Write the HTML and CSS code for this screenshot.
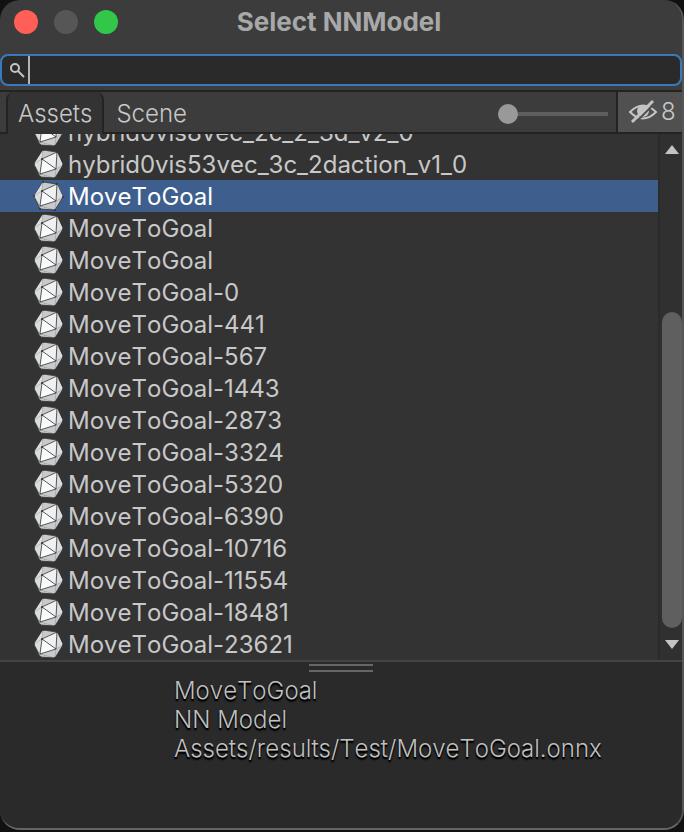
FILE: index.html
```html
<!DOCTYPE html>
<html lang="en">
<head>
<meta charset="utf-8">
<title>Select NNModel</title>
<link rel="stylesheet" href="styles.css">
</head>
<body>
<svg class="defs" aria-hidden="true">
  <symbol id="model" viewBox="0 0 32 32">
    <path fill="#c8cacb" stroke="#333" stroke-width=".8" d="M11 2 25 4 31 17 23 30 8 29 2 16z"/>
    <path fill="#dcddde" d="M2 16 11 2 10 11 8 26zM25 4 31 17 24 21z"/>
    <path fill="#f0f1f2" d="M10 11 25 4 24 21z"/>
    <path fill="#f9fafb" d="M10 11 24 21 8 26z"/>
    <path fill="none" stroke="#333" stroke-width=".8" d="M10 11 25 4 24 21 10 11 8 26 24 21"/>
    <path fill="none" stroke="#333" stroke-width=".8" stroke-opacity=".25" d="M11 2 10 11 2 16 8 26 8 29M8 26 23 30 24 21 31 17"/>
    <path fill="none" stroke="#333" stroke-width="2" stroke-linecap="round" d="M11 2h0M25 4h0M31 17h0M23 30h0M8 29h0M2 16h0M10 11h0"/>
  </symbol>
</svg>
<main class="window">
  <header class="titlebar">
    <div class="lights">
      <button class="light red" aria-label="Close"></button>
      <button class="light grey" aria-label="Minimize"></button>
      <button class="light green" aria-label="Zoom"></button>
    </div>
    <h1>Select NNModel</h1>
  </header>
  <label class="search">
    <svg viewBox="0 0 16 16" width="16" height="16" aria-hidden="true"><circle cx="6" cy="6" r="4" fill="none" stroke="#c4c4c4" stroke-width="2"/><path d="m9 9 6 6" stroke="#c4c4c4" stroke-width="2"/></svg>
    <span class="caret"></span>
    <input type="text" aria-label="Search">
  </label>
  <nav class="toolbar">
    <button class="tab active">Assets</button>
    <button class="tab">Scene</button>
    <input class="size" type="range" min="0" max="100" value="0" aria-label="Preview size">
    <button class="hidden-count" aria-label="Hidden packages 8">
      <svg viewBox="0 0 30 26" width="30" height="26" aria-hidden="true"><path d="M2 13Q15 0 28 13Q15 26 2 13z" fill="none" stroke="#c4c4c4" stroke-width="2"/><circle cx="15" cy="12" r="6" fill="#c4c4c4"/><path d="M6 25 28 3" stroke="#505050" stroke-width="2"/><path d="M4 23 25 2" stroke="#c4c4c4" stroke-width="3"/></svg>
      <span>8</span>
    </button>
  </nav>
  <section class="browser">
    <ul class="list">
      <li><svg><use href="#model"/></svg>hybrid0vis8vec_2c_2_3d_v2_0</li>
      <li><svg><use href="#model"/></svg>hybrid0vis53vec_3c_2daction_v1_0</li>
      <li class="selected"><svg><use href="#model"/></svg>MoveToGoal</li>
      <li><svg><use href="#model"/></svg>MoveToGoal</li>
      <li><svg><use href="#model"/></svg>MoveToGoal</li>
      <li><svg><use href="#model"/></svg>MoveToGoal-0</li>
      <li><svg><use href="#model"/></svg>MoveToGoal-441</li>
      <li><svg><use href="#model"/></svg>MoveToGoal-567</li>
      <li><svg><use href="#model"/></svg>MoveToGoal-1443</li>
      <li><svg><use href="#model"/></svg>MoveToGoal-2873</li>
      <li><svg><use href="#model"/></svg>MoveToGoal-3324</li>
      <li><svg><use href="#model"/></svg>MoveToGoal-5320</li>
      <li><svg><use href="#model"/></svg>MoveToGoal-6390</li>
      <li><svg><use href="#model"/></svg>MoveToGoal-10716</li>
      <li><svg><use href="#model"/></svg>MoveToGoal-11554</li>
      <li><svg><use href="#model"/></svg>MoveToGoal-18481</li>
      <li><svg><use href="#model"/></svg>MoveToGoal-23621</li>
    </ul>
    <div class="scrollbar">
      <button aria-label="Scroll up"><svg viewBox="0 0 16 10" width="16" height="10"><path d="M1 9 8 0 15 9z"/></svg></button>
      <div class="track"><div class="thumb"></div></div>
      <button aria-label="Scroll down"><svg viewBox="0 0 16 10" width="16" height="10"><path d="M1 1 8 10 15 1z"/></svg></button>
    </div>
  </section>
  <footer class="preview">
    <div class="grip"></div>
    <p>MoveToGoal</p>
    <p>NN Model</p>
    <p>Assets/results/Test/MoveToGoal.onnx</p>
  </footer>
</main>
</body>
</html>
```
FILE: styles.css
```css
* { box-sizing: border-box; }
body {
  margin: 0;
  background: #111;
  color: #c8c8c8;
  font: 24px/34px Inter, "Liberation Sans", sans-serif;
  font-kerning: none;
}
button, input {
  margin: 0;
  padding: 0;
  border: 0;
  background: none;
  color: inherit;
  font: inherit;
  font-kerning: none;
}
.defs { position: absolute; width: 0; height: 0; }
.window {
  display: flex;
  flex-direction: column;
  height: calc(100vh - 2px);
  overflow: hidden;
  background: #3c3c3c;
  border-right: 2px solid #565656;
  border-bottom: 2px solid #656565;
  border-radius: 20px;
}
.titlebar {
  display: grid;
  grid-template-columns: 1fr auto 1fr;
  align-items: center;
  height: 54px;
  padding: 0 18px 10px 14px;
}
.lights { display: flex; gap: 16px; }
.light { width: 24px; height: 24px; border-radius: 50%; }
.red { background: #ff5f57; }
.grey { background: #565656; }
.green { background: #32c748; }
h1 { margin: 0; font-size: 26px; line-height: 30px; font-weight: 700; color: #a8a8a8; }
.search {
  display: flex;
  align-items: center;
  height: 32px;
  padding-left: 7px;
  background: #2a2a2a;
  border: 2px solid #3a79bb;
  border-radius: 8px;
}
.caret { width: 2px; height: 28px; margin-left: 3px; background: #b4b4b4; }
.search input { flex: 1; min-width: 0; outline: 0; }
.toolbar {
  display: flex;
  align-items: stretch;
  height: 44px;
  margin-top: 4px;
  padding-left: 6px;
  border: solid #232323;
  border-width: 2px 0;
  font-weight: 300;
}
.tab { padding: 4px 12px 0; }
.active {
  margin-bottom: -2px;
  padding: 2px 10px 0;
  background: #333;
  border: solid #232323;
  border-width: 0 2px;
  border-radius: 8px 8px 0 0;
}
.size { width: 110px; margin: 12px 8px 8px auto; height: 20px; appearance: none; }
.size::-webkit-slider-runnable-track { height: 20px; background: linear-gradient(#5e5e5e, #5e5e5e) center / 100% 4px no-repeat; }
.size::-webkit-slider-thumb { appearance: none; width: 20px; height: 20px; border-radius: 50%; background: #999; }
.hidden-count {
  display: flex;
  align-items: center;
  gap: 3px;
  width: 66px;
  padding-left: 10px;
  background: #505050;
  border-left: 2px solid #232323;
}
.browser { display: flex; flex: 1; min-height: 0; background: #333; }
.list {
  display: flex;
  flex: 1;
  flex-direction: column;
  justify-content: flex-end;
  min-width: 0;
  margin: 0;
  padding: 0;
  overflow: hidden;
  list-style: none;
}
.list li { display: flex; flex: none; gap: 4px; height: 32px; padding-left: 32px; white-space: nowrap; }
.list svg { width: 32px; height: 32px; }
.selected { background: #3e5f8e; color: #fff; }
.scrollbar {
  display: flex;
  flex-direction: column;
  width: 24px;
  padding-left: 2px;
  background: #303030;
  border-left: 2px solid #2b2b2b;
}
.scrollbar button { display: flex; align-items: center; justify-content: center; height: 32px; fill: #c4c4c4; }
.track { display: flex; flex: 1; align-items: flex-end; }
.thumb { width: 100%; height: 316px; max-height: 100%; background: #5f5f5f; border-radius: 10px; }
.preview {
  height: 168px;
  padding: 2px 0 0 174px;
  background: #2a2a2a;
  border-top: 2px solid #434343;
  color: #c0c0c0;
  font-weight: 300;
  text-shadow: 0 2px 2px #000, 0 2px 1px #000;
}
.preview p { margin: 0; line-height: 29px; }
.grip { width: 64px; height: 8px; margin: 0 0 4px 135px; border: solid #666; border-width: 2px 0; }
```
